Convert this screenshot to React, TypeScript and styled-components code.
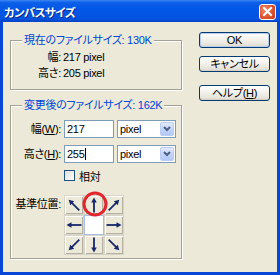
import React from "react";
import styled, { createGlobalStyle } from "styled-components";

const GlobalStyle = createGlobalStyle`
  html, body { margin: 0; padding: 0; }
  body { width: 280px; height: 275px; overflow: hidden; background: #ECE9D8; }
`;

const FONT = `"Liberation Sans", "Noto Sans CJK JP", sans-serif`;

const Window = styled.div`
  width: 280px;
  height: 275px;
  display: flex;
  flex-direction: column;
  font-family: ${FONT};
  font-size: 11px;
  letter-spacing: -0.3px;
  color: #000;
  font-feature-settings: "palt";
`;

const TitleBar = styled.div`
  height: 22px;
  flex: none;
  box-sizing: border-box;
  display: flex;
  align-items: center;
  justify-content: space-between;
  padding: 1px 4px 0 4px;
  background: linear-gradient(
    to bottom,
    #3b86f5 0%,
    #0b5fe8 12%,
    #0256e6 45%,
    #0453df 85%,
    #0343c6 100%
  );
`;

const Title = styled.span`
  color: #fff;
  font-weight: bold;
  font-size: 11.5px;
  letter-spacing: -0.6px;
  text-shadow: 1px 1px 0 #0a2a8a;
`;

const CloseButton = styled.div`
  width: 17px;
  height: 16px;
  box-sizing: border-box;
  border: 1px solid #fff;
  border-radius: 3px;
  background: radial-gradient(circle at 35% 35%, #f08a6e 0%, #e0532f 55%, #c23a1d 100%);
  display: flex;
  align-items: center;
  justify-content: center;
`;

const Frame = styled.div`
  flex: 1;
  display: flex;
  gap: 15px;
  background: #ece9d8;
  border: 3px solid #0846d8;
  border-top: none;
  padding-left: 7px;
`;

const LeftCol = styled.div`
  width: 174px;
  padding-top: 18px;
  display: flex;
  flex-direction: column;
  gap: 15px;
`;

const Group = styled.div<{ $pad: string }>`
  position: relative;
  width: 172px;
  box-sizing: border-box;
  border: 1px solid #a3a196;
  box-shadow: inset 1px 1px 0 #fff, 1px 1px 0 #fff;
  padding: ${(p) => p.$pad};
`;

const Caption = styled.span`
  position: absolute;
  top: -7px;
  left: 11px;
  padding: 0 2px;
  line-height: 12px;
  color: #0046d5;
  background: #ece9d8;
  white-space: nowrap;
`;

const Form = styled.div<{ $gap: number }>`
  display: grid;
  grid-template-columns: 50px auto;
  column-gap: ${(p) => p.$gap}px;
  align-items: center;
`;

const Label = styled.span<{ $mt?: number }>`
  justify-self: end;
  white-space: nowrap;
  line-height: 16px;
  margin-top: ${(p) => p.$mt ?? 0}px;
`;

const Value = styled.span`
  line-height: 16px;
  white-space: nowrap;
`;

const Fields = styled.div<{ $mt?: number }>`
  display: flex;
  align-items: center;
  gap: 3px;
  margin-top: ${(p) => p.$mt ?? 0}px;
`;

const TextBox = styled.div`
  width: 50px;
  height: 18px;
  box-sizing: border-box;
  border: 1px solid #7f9db9;
  background: #fff;
  display: flex;
  align-items: center;
  padding-left: 2px;
`;

const Caret = styled.span`
  display: inline-block;
  width: 1px;
  height: 12px;
  background: #000;
  margin-left: 1px;
`;

const Combo = styled.div`
  width: 59px;
  height: 18px;
  box-sizing: border-box;
  border: 1px solid #7f9db9;
  background: #fff;
  display: flex;
  align-items: center;
  justify-content: space-between;
  padding: 1px 1px 1px 2px;
`;

const DropButton = styled.div`
  width: 14px;
  height: 14px;
  box-sizing: border-box;
  border: 1px solid #b9cdf6;
  border-radius: 2px;
  background: linear-gradient(to bottom, #e3ebfe 0%, #c4d5fa 50%, #b4c8f5 100%);
  display: flex;
  align-items: center;
  justify-content: center;
`;

const CheckRow = styled.div`
  grid-column: 2;
  display: flex;
  align-items: center;
  gap: 4px;
  margin-top: 7px;
  height: 11px;
`;

const CheckBox = styled.div`
  width: 11px;
  height: 11px;
  box-sizing: border-box;
  border: 1px solid #1c5180;
  background: linear-gradient(135deg, #dcdcd7 0%, #fff 100%);
`;

const AnchorLabel = styled.span`
  justify-self: end;
  align-self: start;
  white-space: nowrap;
  line-height: 12px;
  margin-top: 17px;
`;

const AnchorWrap = styled.div`
  position: relative;
  width: 58px;
  height: 58px;
  margin-top: 14px;
`;

const AnchorGrid = styled.div`
  display: grid;
  grid-template-columns: repeat(3, 1fr);
  grid-template-rows: repeat(3, 1fr);
  width: 58px;
  height: 58px;
`;

const Cell = styled.div<{ $center?: boolean }>`
  box-sizing: border-box;
  display: flex;
  align-items: center;
  justify-content: center;
  background: ${(p) => (p.$center ? "#fff" : "#ece9d8")};
  border: 1px solid ${(p) => (p.$center ? "#a9bfe0" : "#d8d5c8")};
  box-shadow: ${(p) =>
    p.$center ? "none" : "inset 1px 1px 0 #fff, inset -1px -1px 0 #b5b2a4"};
`;

const RedCircle = styled.svg`
  position: absolute;
  left: 16px;
  top: -6px;
  pointer-events: none;
`;

const RightCol = styled.div`
  padding-top: 10px;
  display: flex;
  flex-direction: column;
`;

const Button = styled.div<{ $mt?: number; $default?: boolean }>`
  width: 71px;
  height: 16px;
  box-sizing: border-box;
  margin-top: ${(p) => p.$mt ?? 0}px;
  border: 1px solid #003c74;
  border-radius: 3px;
  background: linear-gradient(to bottom, #ffffff 0%, #f4f3ee 40%, #e6e3d8 85%, #d6d0c5 100%);
  box-shadow: ${(p) =>
    p.$default ? "inset 0 0 0 1px #b6cdf3" : "inset 0 -1px 0 #d6d0c5"};
  display: flex;
  align-items: center;
  justify-content: center;
  line-height: 12px;
  white-space: nowrap;
`;

const U = styled.span`
  text-decoration: underline;
`;

const dirs: (number | null)[] = [-45, 0, 45, -90, null, 90, -135, 180, 135];

function Arrow({ angle }: { angle: number }) {
  const diag = angle % 90 !== 0;
  const len = diag ? 7.5 : 7.5;
  const c = 9;
  return (
    <svg width="18" height="18" viewBox="0 0 18 18">
      <g transform={`rotate(${angle} ${c} ${c})`} fill="#16286a" stroke="#16286a">
        <line x1={c} y1={c + len} x2={c} y2={c - len + 3} strokeWidth="1.8" />
        <polygon points={`${c},${c - len} ${c - 2.8},${c - len + 5} ${c + 2.8},${c - len + 5}`} stroke="none" />
      </g>
    </svg>
  );
}

const Chevron = () => (
  <svg width="8" height="6" viewBox="0 0 8 6">
    <path d="M1 1 L4 4 L7 1" fill="none" stroke="#4d6185" strokeWidth="2" />
  </svg>
);

export default function App() {
  return (
    <>
      <GlobalStyle />
      <Window>
        <TitleBar>
          <Title>カンバスサイズ</Title>
          <CloseButton>
            <svg width="11" height="11" viewBox="0 0 11 11">
              <path d="M2 2 L9 9 M9 2 L2 9" stroke="#fff" strokeWidth="2" strokeLinecap="square" />
            </svg>
          </CloseButton>
        </TitleBar>
        <Frame>
          <LeftCol>
            <Group $pad="8px 0 8px">
              <Caption>現在のファイルサイズ: 130K</Caption>
              <Form $gap={2}>
                <Label>幅:</Label>
                <Value>217 pixel</Value>
                <Label>高さ:</Label>
                <Value>205 pixel</Value>
              </Form>
            </Group>
            <Group $pad="14px 0 5px">
              <Caption>変更後のファイルサイズ: 162K</Caption>
              <Form $gap={3}>
                <Label>
                  幅(<U>W</U>):
                </Label>
                <Fields>
                  <TextBox>217</TextBox>
                  <Combo>
                    <span>pixel</span>
                    <DropButton>
                      <Chevron />
                    </DropButton>
                  </Combo>
                </Fields>
                <Label $mt={7}>
                  高さ(<U>H</U>):
                </Label>
                <Fields $mt={7}>
                  <TextBox>
                    255
                    <Caret />
                  </TextBox>
                  <Combo>
                    <span>pixel</span>
                    <DropButton>
                      <Chevron />
                    </DropButton>
                  </Combo>
                </Fields>
                <CheckRow>
                  <CheckBox />
                  <span>相対</span>
                </CheckRow>
                <AnchorLabel>基準位置:</AnchorLabel>
                <AnchorWrap>
                  <AnchorGrid>
                    {dirs.map((d, i) => (
                      <Cell key={i} $center={d === null}>
                        {d !== null && <Arrow angle={d} />}
                      </Cell>
                    ))}
                  </AnchorGrid>
                  <RedCircle width="30" height="30" viewBox="0 0 30 30">
                    <circle cx="15" cy="15" r="11" fill="none" stroke="#e3262e" strokeWidth="3" />
                  </RedCircle>
                </AnchorWrap>
              </Form>
            </Group>
          </LeftCol>
          <RightCol>
            <Button $default>OK</Button>
            <Button $mt={8}>キャンセル</Button>
            <Button $mt={13}>
              ヘルプ(<U>H</U>)
            </Button>
          </RightCol>
        </Frame>
      </Window>
    </>
  );
}
